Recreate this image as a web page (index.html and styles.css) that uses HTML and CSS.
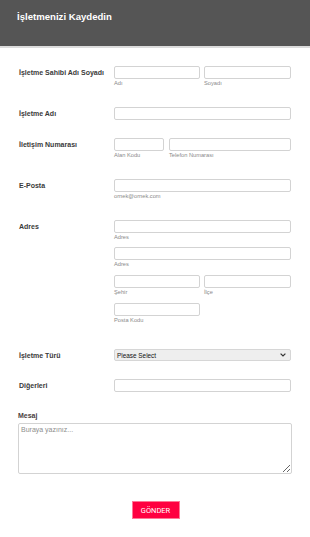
FILE: index.html
```html
<!DOCTYPE html>
<html lang="tr">
<head>
<meta charset="utf-8">
<title>İşletmenizi Kaydedin</title>
<link rel="stylesheet" href="styles.css">
</head>
<body>
<form class="form">
  <header class="header">
    <h1 class="title">İşletmenizi Kaydedin</h1>
  </header>
  <ul class="fields">
    <li class="row">
      <label class="label">İşletme Sahibi Adı Soyadı</label>
      <div class="control split">
        <div class="part"><input class="input"><span class="sub">Adı</span></div>
        <div class="part"><input class="input"><span class="sub">Soyadı</span></div>
      </div>
    </li>
    <li class="row">
      <label class="label">İşletme Adı</label>
      <div class="control"><input class="input"></div>
    </li>
    <li class="row">
      <label class="label">İletişim Numarası</label>
      <div class="control phone">
        <div class="part"><input class="input"><span class="sub">Alan Kodu</span></div>
        <div class="part"><input class="input"><span class="sub">Telefon Numarası</span></div>
      </div>
    </li>
    <li class="row">
      <label class="label">E-Posta</label>
      <div class="control"><input class="input"><span class="sub">ornek@ornek.com</span></div>
    </li>
    <li class="row address">
      <label class="label">Adres</label>
      <div class="control stack">
        <div class="part"><input class="input"><span class="sub">Adres</span></div>
        <div class="part"><input class="input"><span class="sub">Adres</span></div>
        <div class="split">
          <div class="part"><input class="input"><span class="sub">Şehir</span></div>
          <div class="part"><input class="input"><span class="sub">İlçe</span></div>
        </div>
        <div class="split">
          <div class="part"><input class="input"><span class="sub">Posta Kodu</span></div>
        </div>
      </div>
    </li>
    <li class="row">
      <label class="label">İşletme Türü</label>
      <div class="control">
        <div class="select"><span>Please Select</span>
          <svg class="chev" width="6" height="4" viewBox="0 0 6 4"><path d="M0.6 0.6 L3 3 L5.4 0.6" fill="none" stroke="#333" stroke-width="1.2"/></svg>
        </div>
      </div>
    </li>
    <li class="row">
      <label class="label">Diğerleri</label>
      <div class="control"><input class="input"></div>
    </li>
    <li class="message">
      <label class="label">Mesaj</label>
      <textarea class="textarea" placeholder="Buraya yazınız..."></textarea>
    </li>
    <li class="actions">
      <button type="button" class="submit">GÖNDER</button>
    </li>
  </ul>
</form>
</body>
</html>
```
FILE: styles.css
```css
* { box-sizing: border-box; }
html, body { margin: 0; padding: 0; background: #fff; }
body { font-family: "Liberation Sans", Arial, sans-serif; color: #333; }
.form { width: 310px; }
.header {
  background: #555555;
  height: 48px;
  border-bottom: 2px solid #dcdcdc;
  padding: 11px 17px 0;
}
.title {
  margin: 0;
  font-size: 9.6px;
  line-height: 12px;
  font-weight: bold;
  color: #fff;
}
.fields { list-style: none; margin: 0; padding: 9px 0 0; }
.row {
  display: grid;
  grid-template-columns: 95px 177px;
  padding: 9px 0 9px 19px;
  align-items: start;
}
.label {
  font-size: 7px;
  line-height: 9px;
  font-weight: bold;
  color: #3a3a3a;
  padding-top: 2px;
}
.control { display: flex; flex-direction: column; }
.input {
  display: block;
  width: 100%;
  height: 13px;
  margin: 0;
  border: 1px solid #d3d3d3;
  border-radius: 2px;
  background: #fff;
  padding: 0;
}
.sub {
  display: block;
  font-size: 5.7px;
  line-height: 7px;
  margin-top: 1px;
  height: 9px;
  color: #8a8a8a;
}
.split { display: grid; grid-template-columns: 86px 87px; column-gap: 4px; }
.phone { display: grid; grid-template-columns: 50px 122px; column-gap: 5px; }
.stack { gap: 4px; }
.stack > .split { margin-top: 1px; }
.address { padding-bottom: 14px; }
.select {
  display: flex;
  align-items: center;
  justify-content: space-between;
  height: 12px;
  border: 1px solid #d6d6d6;
  border-radius: 2px;
  background: #eeeeee;
  padding: 0 4px 0 2px;
  font-size: 6.4px;
  color: #111;
}
.chev { display: block; }
.message { padding: 10px 0 0 18px; }
.message .label { display: block; padding: 0; color: #4a4040; }
.textarea {
  display: block;
  width: 274px;
  height: 51px;
  margin-top: 3px;
  border: 1px solid #d3d3d3;
  border-radius: 2px;
  padding: 2px 2px;
  font-family: "Liberation Sans", Arial, sans-serif;
  font-size: 7px;
  line-height: 8px;
  color: #333;
}
.textarea::placeholder { color: #8e8e8e; }
.actions { display: flex; justify-content: center; padding-top: 27px; }
.submit {
  width: 48px;
  height: 18px;
  background: #ff0040;
  border: 1px solid #ff7896;
  color: #fff;
  font-family: Roboto, "Liberation Sans", sans-serif;
  font-size: 7.5px;
  padding: 0;
  margin-left: 1px;
}
```
